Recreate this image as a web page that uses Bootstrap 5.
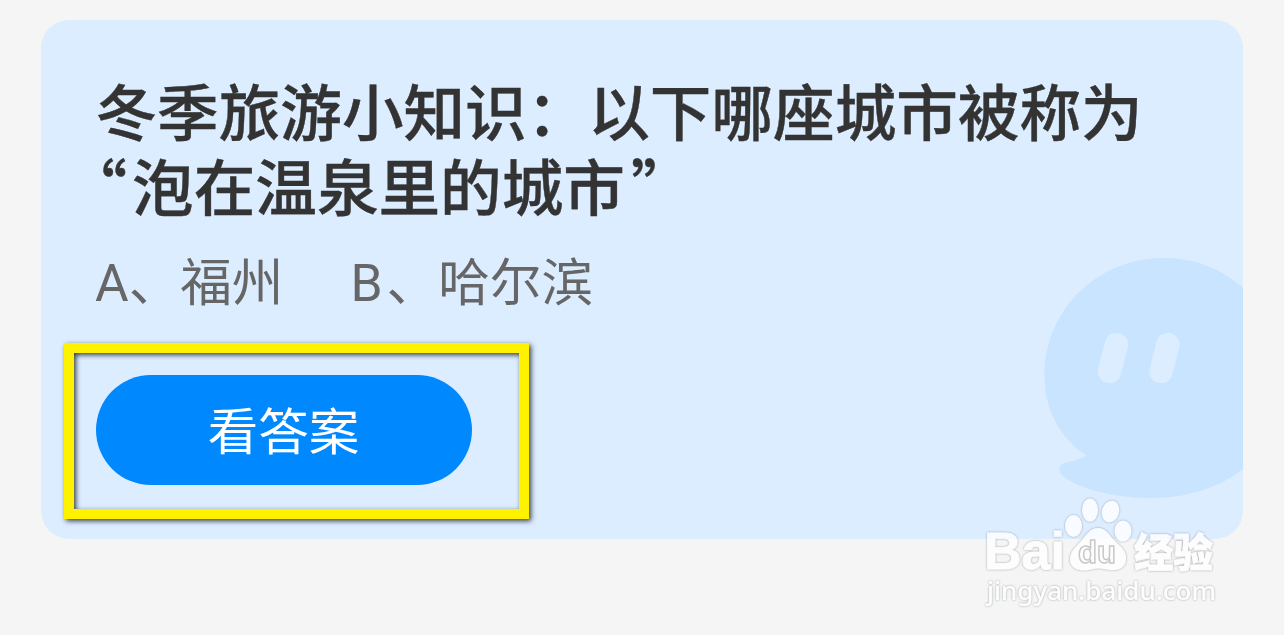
<!DOCTYPE html>
<html lang="zh-CN">
<head>
<meta charset="utf-8">
<meta name="viewport" content="width=device-width, initial-scale=1">
<title>冬季旅游小知识</title>
<link href="https://cdn.jsdelivr.net/npm/bootstrap@5.3.0/dist/css/bootstrap.min.css" rel="stylesheet">
<style>
body{background:#f5f5f5;font-family:"Noto Sans CJK SC",sans-serif;height:635px;overflow:hidden}
.quiz{margin:20px 41px 0;height:519px;background:#dcedff;border-radius:28px;padding:52px 23px 0;--bs-card-border-width:0}
.question{font-size:61.6px;line-height:75px;font-weight:500;color:#333;margin:0 0 0 31.5px;white-space:nowrap;-webkit-text-stroke:.4px #333}
.question .line{display:block}
.question .line+.line{margin-left:-30px}
.question .open-quote{letter-spacing:5px}
.question .close-quote{margin-left:6px}
.options{font-family:Roboto,"Noto Sans CJK SC",sans-serif;font-size:51.6px;line-height:74px;color:#666;margin:25px 0 0 31px}
.options span+span{margin-left:67px}
.options b{font-weight:400;letter-spacing:4px}
.highlight{width:465px;height:176px;margin-top:22px;border:10px solid #fff200;padding:22px 0 0 22px;box-shadow:2px 2px 5px rgba(0,0,0,.75),inset 2px 2px 5px rgba(0,0,0,.75)}
.answer{width:376px;height:110px;background:#08f;font-size:50.5px;line-height:1;padding:0 1px 4px 0;--bs-btn-color:#fff;--bs-btn-border-width:0}
.mascot{right:0;top:235px}
.watermark{left:980px;top:490px}
</style>
</head>
<body>
<main class="card quiz overflow-hidden position-relative">
  <svg class="mascot position-absolute" width="203" height="250" viewBox="0 0 203 250" aria-hidden="true">
    <path fill="#c8e4ff" d="M203 33C181 13 154 3 124 3C57 3 4.500 55 4.500 121C4.500 155 20 183 46.500 200.500C40 205 32 206 25 208C19 210 18 215 21 219C33 231 67 243 112 243C148 243 180 232 203 214Z"/>
    <path stroke="#dcedff" stroke-width="23.500" stroke-linecap="round" d="M76.500 89.500L69.500 116.500M128 89.500L121 116.500"/>
  </svg>
  <h1 class="question"><span class="line">冬季旅游小知识：以下哪座城市被称为</span><span class="line"><span class="open-quote">“</span>泡在温泉里的城市<span class="close-quote">”</span></span></h1>
  <div class="options d-flex"><span>A、福州</span><span><b>B</b>、哈尔滨</span></div>
  <div class="highlight d-flex align-items-start position-relative">
    <button type="button" class="btn answer rounded-pill">看答案</button>
  </div>
</main>
<svg class="watermark position-absolute" width="245" height="125" viewBox="980 490 245 125">
  <defs><filter id="edge" x="-10%" y="-10%" width="120%" height="120%"><feDropShadow dx="0" dy="0" stdDeviation="1" flood-color="#68717c" flood-opacity=".8"/></filter></defs>
  <g opacity=".8">
  <g fill="#fff" filter="url(#edge)">
    <ellipse cx="1073.500" cy="526" rx="8.500" ry="11"/>
    <ellipse cx="1090" cy="510" rx="8" ry="11.500"/>
    <ellipse cx="1110.500" cy="511.500" rx="8.500" ry="11" transform="rotate(15 1110.500 511.500)"/>
    <ellipse cx="1123" cy="531" rx="8.500" ry="10.500"/>
    <path d="M1098 528C1106 528 1109 535 1115 541C1121 547 1127 551 1126 560C1125 569 1117 571 1109 570C1101 568 1096 568 1089 570C1079 572 1070 568 1070 560C1070 551 1076 547 1082 540C1086 535 1090 528 1098 528Z"/>
    <g stroke="#fff" stroke-width=".8" font-family="Liberation Sans,sans-serif" font-weight="700">
      <text x="984" y="569" font-size="52" textLength="81" lengthAdjust="spacingAndGlyphs">Bai</text>
      <text x="1134" y="567" font-family="Noto Sans CJK SC,sans-serif" font-weight="900" font-size="40" textLength="79" lengthAdjust="spacingAndGlyphs">经验</text>
    </g>
    <text x="987" y="600" font-family="Noto Sans,sans-serif" font-weight="500" font-size="25" textLength="229" lengthAdjust="spacingAndGlyphs">jingyan.baidu.com</text>
  </g>
  <text x="1078" y="563" font-family="Liberation Sans,sans-serif" font-weight="700" font-size="32" fill="#fff" stroke="#bcbcbc" stroke-width="1.500" textLength="38" lengthAdjust="spacingAndGlyphs">du</text>
  </g>
</svg>
<script src="https://cdn.jsdelivr.net/npm/bootstrap@5.3.0/dist/js/bootstrap.bundle.min.js"></script>
</body>
</html>
